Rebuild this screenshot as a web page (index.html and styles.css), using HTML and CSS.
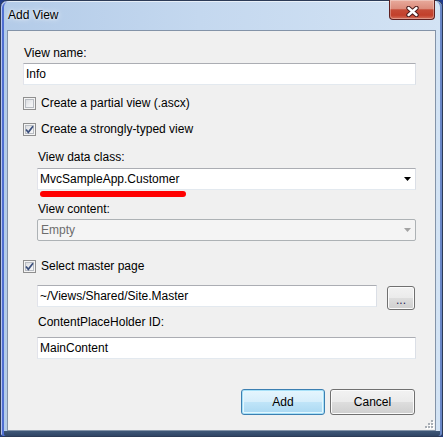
FILE: index.html
```html
<!DOCTYPE html>
<html lang="en">
<head>
    <meta charset="UTF-8">
    <title>Add View</title>
    <link rel="stylesheet" href="styles.css">
</head>
<body>
    <div class="window">
        <div class="titlebar">
            <span class="title">Add View</span>
            <span class="close">
                <svg width="13" height="11" viewBox="0 0 13 11">
                    <path d="M2.5 2 L10.5 9 M10.5 2 L2.5 9" stroke="#4a1c1c" stroke-width="4.4" stroke-linecap="round"/>
                    <path d="M2.5 2 L10.5 9 M10.5 2 L2.5 9" stroke="#fff" stroke-width="2.4" stroke-linecap="round"/>
                </svg>
            </span>
        </div>
        <div class="client">
            <div class="form">
                <div class="lbl">View name:</div>
                <div class="textbox">Info</div>

                <div class="check_row first"><span class="check"></span>Create a partial view (.ascx)</div>
                <div class="check_row"><span class="check"><svg width="11" height="11" viewBox="0 0 11 11"><path d="M2 5.5 L4.3 8.3 L9 2.3" fill="none" stroke="#3b4f7c" stroke-width="1.7"/></svg></span>Create a strongly-typed view</div>

                <div class="group">
                    <div class="lbl lbl_first">View data class:</div>
                    <div class="combo">
                        <span class="combo_text">MvcSampleApp.Customer</span>
                        <svg class="arrow" width="7" height="4" viewBox="0 0 7 4"><polygon points="0,0 7,0 3.5,4" fill="#000"/></svg>
                        <span class="mark"></span>
                    </div>
                    <div class="lbl lbl_next">View content:</div>
                    <div class="combo disabled">
                        <span class="combo_text">Empty</span>
                        <svg class="arrow" width="7" height="4" viewBox="0 0 7 4"><polygon points="0,0 7,0 3.5,4" fill="#a3a3a3"/></svg>
                    </div>
                </div>

                <div class="check_row master"><span class="check"><svg width="11" height="11" viewBox="0 0 11 11"><path d="M2 5.5 L4.3 8.3 L9 2.3" fill="none" stroke="#3b4f7c" stroke-width="1.7"/></svg></span>Select master page</div>

                <div class="group">
                    <div class="master_row">
                        <div class="textbox">~/Views/Shared/Site.Master</div>
                        <span class="btn browse">...</span>
                    </div>
                    <div class="lbl lbl_holder">ContentPlaceHolder ID:</div>
                    <div class="textbox holder">MainContent</div>
                </div>

                <div class="actions">
                    <span class="btn btn_default">Add</span>
                    <span class="btn btn_cancel">Cancel</span>
                </div>
            </div>
            <svg class="grip" width="10" height="10" viewBox="0 0 10 10">
                <rect x="8" y="2" width="2" height="2" fill="#fff"/>
                <rect x="5" y="5" width="2" height="2" fill="#fff"/>
                <rect x="8" y="5" width="2" height="2" fill="#fff"/>
                <rect x="2" y="8" width="2" height="2" fill="#fff"/>
                <rect x="5" y="8" width="2" height="2" fill="#fff"/>
                <rect x="8" y="8" width="2" height="2" fill="#fff"/>
                <rect x="7" y="1" width="2" height="2" fill="#a8aeb5"/>
                <rect x="4" y="4" width="2" height="2" fill="#a8aeb5"/>
                <rect x="7" y="4" width="2" height="2" fill="#a8aeb5"/>
                <rect x="1" y="7" width="2" height="2" fill="#a8aeb5"/>
                <rect x="4" y="7" width="2" height="2" fill="#a8aeb5"/>
                <rect x="7" y="7" width="2" height="2" fill="#a8aeb5"/>
            </svg>
        </div>
    </div>
</body>
</html>
```

FILE: styles.css
```css
html{
    font-family: "Liberation Sans", Arial, sans-serif;
    font-size: 12px;
}
body{margin: 0;padding: 0;background: #1f3a8a;}

.window{
    box-sizing: border-box;
    width: 443px;
    height: 437px;
    border: 1px solid #2c3b57;
    border-radius: 7px 7px 3px 3px;
    background:
        linear-gradient(#3f5878, #2f4565) no-repeat left bottom / 100% 5px,
        linear-gradient(to right, #b3cbe8 0, #c4d8ef 45%, #d3e3f4 100%);
    box-shadow: inset 1px 1px 0 rgba(255,255,255,.6), inset 3px 0 0 #4f6fd2, inset -2px 0 0 #6a88c8;
    display: flex;
    flex-direction: column;
    color: #000;
}

.titlebar{
    height: 29px;
    display: flex;
    justify-content: space-between;
    align-items: flex-start;
}
.titlebar .title{
    padding: 7px 0 0 7px;
    line-height: 15px;
    text-shadow: 0 0 6px rgba(255,255,255,.95), 0 0 3px rgba(255,255,255,.8);
}
.titlebar .close{
    box-sizing: border-box;
    width: 46px;
    height: 20px;
    margin: -1px 7px 0 0;
    border: 1px solid #5e2020;
    border-top: none;
    border-radius: 0 0 4px 4px;
    background: linear-gradient(#e8aa9c 0, #dc8c7c 45%, #c54b37 52%, #c23f2b 80%, #d4705c 100%);
    box-shadow: inset 0 0 0 1px rgba(255,255,255,.3);
    display: flex;
    justify-content: center;
    padding-top: 6px;
}
.titlebar .close svg{display: block;}

.client{
    position: relative;
    box-sizing: border-box;
    height: 401px;
    margin: 0 6px;
    border: 1px solid #8393a8;
    background: #f0f0f0;
}
.form{
    padding: 15px 19px 0 15px;
    display: flex;
    flex-direction: column;
}

.lbl{
    line-height: 15px;
    height: 15px;
    padding-left: 1px;
}
.lbl_first{margin-top: 14px;}
.lbl_next{margin-top: 12px;}
.lbl_holder{margin-top: 5px;}

.textbox{
    box-sizing: border-box;
    height: 22px;
    margin-top: 2px;
    border: 1px solid;
    border-color: #abadb3 #dbdfe6 #e3e9ef #e2e3ea;
    background: #fff;
    padding-left: 2px;
    line-height: 20px;
}
.textbox.holder{margin-top: 7px;}

.check_row{
    display: flex;
    align-items: center;
    height: 13px;
    line-height: 13px;
    margin-top: 13px;
}
.check_row.first{margin-top: 12px;}
.check_row.master{margin-top: 19px;}
.check{
    box-sizing: border-box;
    width: 13px;
    height: 13px;
    margin-right: 5px;
    border: 1px solid #8f8f8f;
    background: linear-gradient(135deg, #d2d4d8 0, #eeeff1 55%, #fbfbfb 100%);
    box-shadow: inset 0 0 0 1px #f4f4f4, inset 0 0 0 2px #b8bcc2;
    display: flex;
    align-items: center;
    justify-content: center;
}
.check svg{display: block;}

.group{
    padding-left: 14px;
    display: flex;
    flex-direction: column;
}

.combo{
    position: relative;
    box-sizing: border-box;
    height: 22px;
    margin-top: 3px;
    border: 1px solid;
    border-color: #abadb3 #dbdfe6 #e3e9ef #e2e3ea;
    background: #fff;
    padding: 0 4px 0 2px;
    display: flex;
    align-items: center;
    justify-content: space-between;
    line-height: 20px;
}
.combo .arrow{display: block;}
.combo.disabled{
    margin-top: 2px;
    border-color: #adb2b5;
    border-radius: 2px;
    background: #f4f4f4;
    color: #6d6d6d;
    padding-left: 3px;
}
.combo .mark{
    position: absolute;
    left: 2px;
    top: 22px;
    width: 146px;
    height: 6px;
    border-radius: 3px;
    background: #f00;
}

.master_row{
    margin-top: 12px;
    display: flex;
    align-items: flex-start;
    gap: 10px;
}
.master_row .textbox{
    margin-top: 0;
    width: 340px;
}

.btn{
    box-sizing: border-box;
    display: flex;
    align-items: center;
    justify-content: center;
    border: 1px solid #707070;
    border-radius: 3px;
    background: linear-gradient(#f2f2f2 0, #ebebeb 48%, #dddddd 52%, #cfcfcf 100%);
    box-shadow: inset 0 0 0 1px #fbfbfb;
}
.btn.browse{
    width: 28px;
    height: 24px;
    margin-top: 1px;
    padding-top: 3px;
    color: #2a1e55;
}

.actions{
    margin-top: 30px;
    margin-right: 1px;
    display: flex;
    justify-content: flex-end;
    gap: 5px;
}
.btn_default{
    width: 84px;
    height: 26px;
    border-color: #3c7fb1;
    background: linear-gradient(#e6f5fd 0, #d6eefb 48%, #bfe4f8 52%, #aad8f2 100%);
    box-shadow: inset 0 0 0 1px #a6e0f8, inset 0 0 0 2px #e3f6fe;
}
.btn_cancel{
    width: 85px;
    height: 26px;
}

.grip{
    position: absolute;
    right: 1px;
    bottom: 1px;
}
```
